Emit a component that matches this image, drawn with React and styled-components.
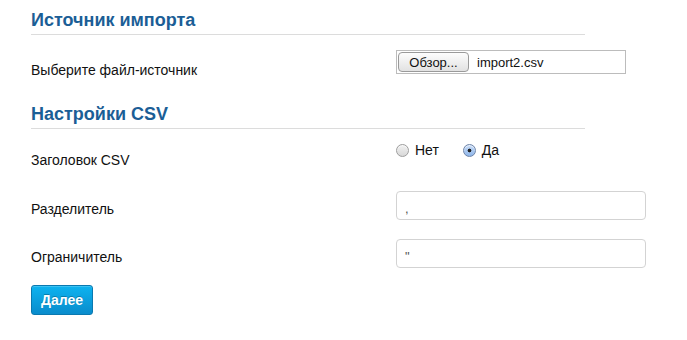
import React from 'react';
import styled, { createGlobalStyle } from 'styled-components';

const Global = createGlobalStyle`
    body {
        margin: 0;
        background: #fff;
        font-family: 'Liberation Sans', Arial, sans-serif;
        color: #111;
    }
`;

const Page = styled.div`
    padding: 9px 0 0 31px;
    width: 615px;
`;

const SectionTitle = styled.h3`
    margin: ${props => props.top || 0}px 0 0 0;
    width: 554px;
    font-size: 18px;
    line-height: 22px;
    font-weight: bold;
    color: #1b5e96;
    padding-bottom: 3px;
    border-bottom: 1px solid #dcdcdc;
`;

const Row = styled.div`
    display: flex;
    align-items: flex-start;
    margin-top: ${props => props.top}px;
`;

const Label = styled.label`
    width: 365px;
    flex: none;
    font-size: 14px;
    line-height: 18px;
    padding-top: ${props => props.pad}px;
`;

const FileBox = styled.div`
    display: flex;
    align-items: center;
    width: 230px;
    height: 24px;
    box-sizing: border-box;
    border: 1px solid #bcbcbc;
    padding-left: 1px;
    font-size: 13px;
`;

const BrowseButton = styled.span`
    display: inline-flex;
    align-items: center;
    justify-content: center;
    height: 20px;
    width: 71px;
    box-sizing: border-box;
    border: 1px solid #9a9a9a;
    border-radius: 4px;
    background: linear-gradient(#fdfdfd, #e2e2e2);
    font-size: 13px;
    margin-right: 8px;
`;

const RadioGroup = styled.div`
    display: flex;
    align-items: center;
    height: 18px;
    font-size: 14px;
`;

const RadioItem = styled.label`
    display: flex;
    align-items: center;
    margin-right: ${props => props.gap || 0}px;
`;

const RadioDot = styled.span`
    width: 13px;
    height: 13px;
    box-sizing: border-box;
    border-radius: 50%;
    margin-right: 6px;
    border: 1px solid ${props => props.checked ? '#6d83a8' : '#9d9d9d'};
    background: ${props => props.checked
        ? 'radial-gradient(circle at 50% 50%, #222 0 1.6px, transparent 2.2px), linear-gradient(#c7dcf7, #8fb6ea)'
        : 'linear-gradient(#f1f1f1, #d8d8d8)'};
    box-shadow: inset 0 1px 1px rgba(255,255,255,0.7);
`;

const TextInput = styled.div`
    width: 250px;
    height: 29px;
    box-sizing: border-box;
    border: 1px solid #d3d3d3;
    border-radius: 4px;
    padding: 9px 0 0 8px;
    font-size: 13px;
    line-height: 16px;
    color: #555;
`;

const SubmitButton = styled.button`
    margin-top: 17px;
    width: 62px;
    height: 30px;
    border: 1px solid #0a79b0;
    border-radius: 3px;
    background: linear-gradient(#0db3f0, #0a8ccc);
    color: #fff;
    font-family: 'Liberation Sans', Arial, sans-serif;
    font-size: 14px;
    font-weight: bold;
    text-shadow: 0 -1px 0 rgba(0,0,0,0.25);
    box-shadow: inset 0 1px 0 rgba(255,255,255,0.2);
    padding: 0;
`;

export default function App() {
    return <Page>
        <Global />
        <SectionTitle>Источник импорта</SectionTitle>
        <Row top={15}>
            <Label pad={11}>Выберите файл-источник</Label>
            <FileBox>
                <BrowseButton>Обзор...</BrowseButton>
                import2.csv
            </FileBox>
        </Row>
        <SectionTitle top={24}>Настройки CSV</SectionTitle>
        <Row top={12}>
            <Label pad={10}>Заголовок CSV</Label>
            <RadioGroup>
                <RadioItem gap={24}><RadioDot />Нет</RadioItem>
                <RadioItem><RadioDot checked />Да</RadioItem>
            </RadioGroup>
        </Row>
        <Row top={22}>
            <Label pad={9}>Разделитель</Label>
            <TextInput>,</TextInput>
        </Row>
        <Row top={19}>
            <Label pad={9}>Ограничитель</Label>
            <TextInput>"</TextInput>
        </Row>
        <SubmitButton>Далее</SubmitButton>
    </Page>
}
